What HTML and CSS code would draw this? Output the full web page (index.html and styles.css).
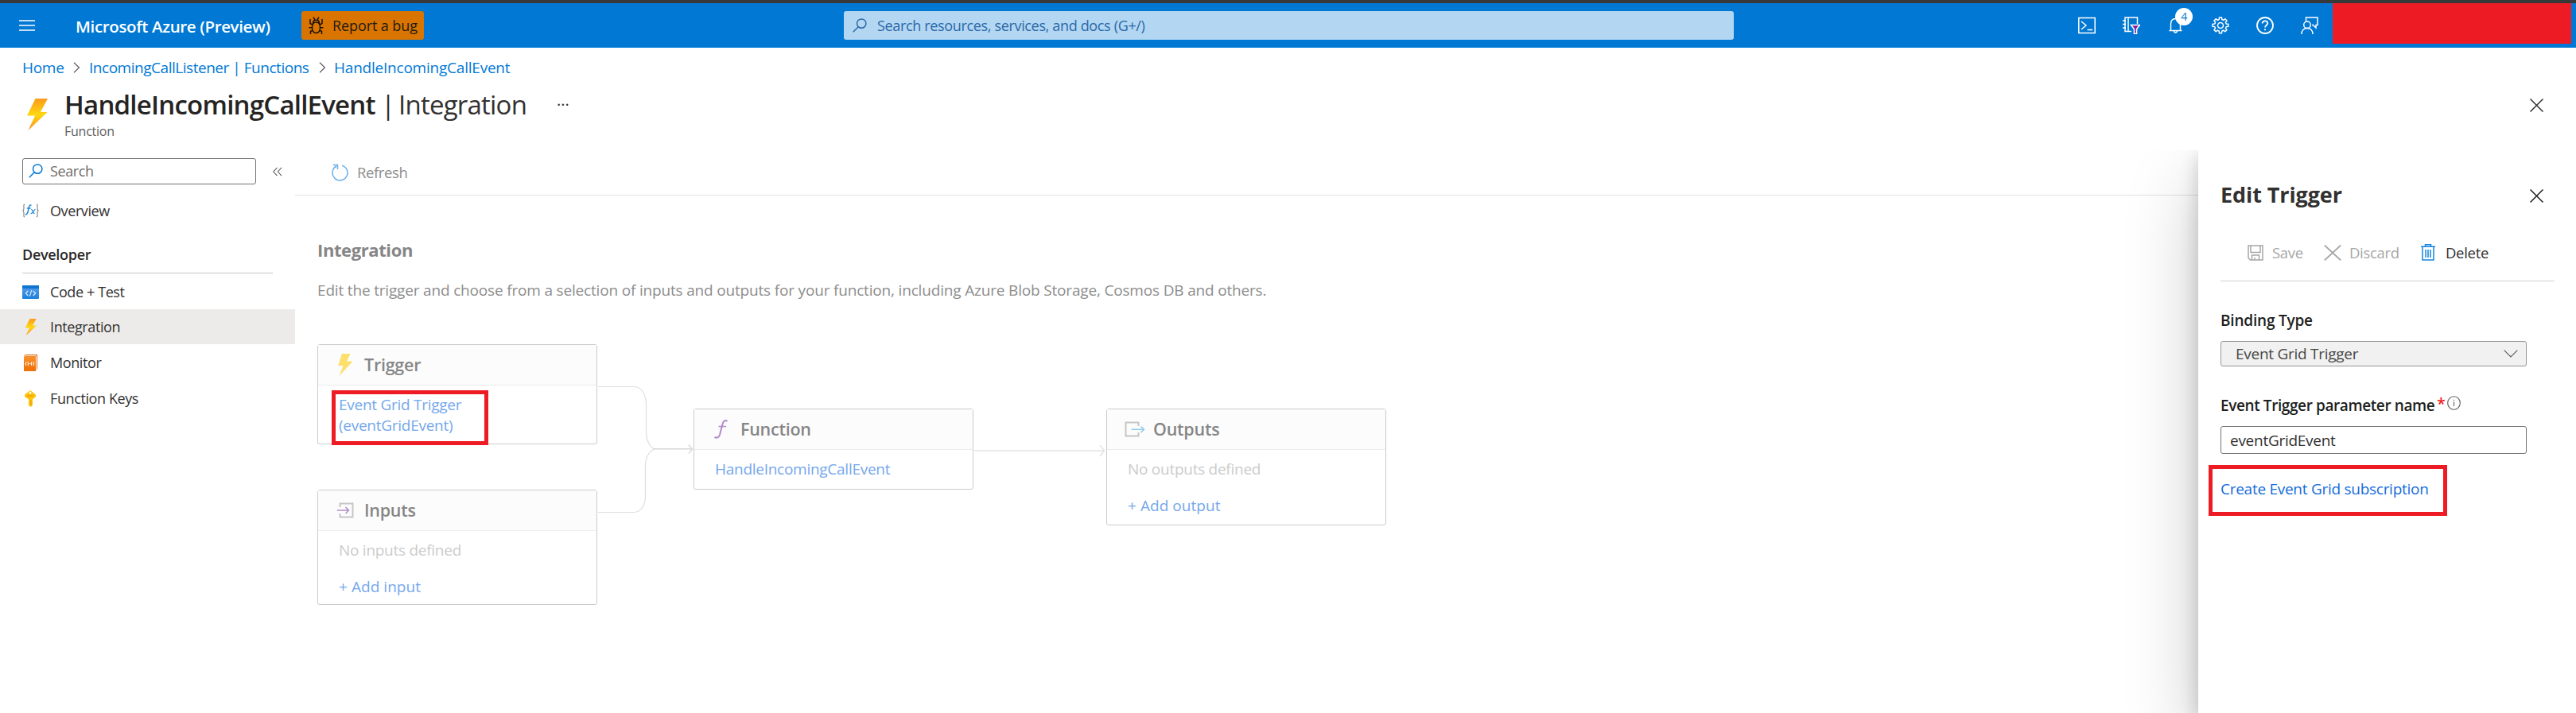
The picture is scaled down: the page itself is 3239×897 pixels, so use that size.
FILE: index.html
```html
<!DOCTYPE html>
<html lang="en">
<head>
<meta charset="utf-8">
<title>HandleIncomingCallEvent | Integration - Microsoft Azure</title>
<link rel="stylesheet" href="styles.css">
</head>
<body>
<svg width="0" height="0" class="defs">
  <defs>
    <linearGradient id="bolt" x1="0" y1="0" x2="0" y2="1">
      <stop offset="0" stop-color="#fd9a1c"/><stop offset=".5" stop-color="#fed70f"/><stop offset="1" stop-color="#fb8f1e"/>
    </linearGradient>
    <linearGradient id="orange" x1="0" y1="0" x2="0" y2="1">
      <stop offset="0" stop-color="#f9912b"/><stop offset="1" stop-color="#ee6f05"/>
    </linearGradient>
    <linearGradient id="blue" x1="0" y1="0" x2="0" y2="1">
      <stop offset="0" stop-color="#5ea0ef"/><stop offset="1" stop-color="#1a7fdc"/>
    </linearGradient>
  </defs>
</svg>

<header class="topbar">
  <svg class="burger" width="20" height="14" viewBox="0 0 20 14" stroke="#fff" stroke-width="1.4"><path d="M0 1h20M0 7h20M0 13h20"/></svg>
  <div class="brand">Microsoft Azure (Preview)</div>
  <button class="bug">
    <svg width="19" height="22" viewBox="0 0 19 22" fill="none" stroke="#1d1206" stroke-width="1.5"><path d="M9.5 7c-3.2 0-5 2.500-5 6.500s1.800 7 5 7 5-3 5-7-1.800-6.500-5-6.500zM5.500 8.500C5.500 5.500 7 4.300 9.500 4.300s4 1.200 4 4.200M7.500 4.300V3L6 .7M11.500 4.300V3L13 .7M4.800 10L2 8.500V3M14.200 10L17 8.500V3M4.500 13.800H.5M14.500 13.800h4M5 17l-2.500 1.500V22M14 17l2.500 1.500V22"/></svg>
    <span>Report a bug</span>
  </button>
  <div class="global-search">
    <svg width="18" height="18" viewBox="0 0 18 18" fill="none" stroke="#2a68a8" stroke-width="1.5"><circle cx="11.200" cy="6.600" r="5.700"/><path d="M7.200 10.700L.7 17.300"/></svg>
    <span>Search resources, services, and docs (G+/)</span>
  </div>
  <div class="tools">
    <svg width="22" height="22" viewBox="0 0 22 22" fill="none" stroke="#fff" stroke-width="1.500"><path d="M.8 1.500h20.400v19H.8zM4 6l6 5-6 5M11.500 16.500H18"/></svg>
    <svg width="22" height="22" viewBox="0 0 22 22" fill="none" stroke="#fff" stroke-width="1.500"><path d="M18.500 9V1H3v17.500h8M7 1v17.500M0 5h4M0 9.500h4M0 14h4"/><path d="M10.500 10.500h11l-3.900 5v6h-3.200v-6z" fill="#7b1fa2"/></svg>
    <div class="bell">
      <svg width="22" height="22" viewBox="0 0 22 22" fill="none" stroke="#fff" stroke-width="1.500"><path d="M2.500 17.500h16M4.500 17.500V9.500C4.500 5 7 2.500 10.500 2.500s6 2.500 6 7v8M8.500 18c.3 1.500 1 2 2 2s1.700-.5 2-2"/></svg>
      <span class="badge">4</span>
    </div>
    <svg width="22" height="22" viewBox="0 0 22 22" fill="none" stroke="#fff" stroke-width="1.500"><path d="M9.200 3.500L9.500 1h3l.3 2.500 2 .9 2-1.600 2.200 2.200-1.600 2 .9 2 2.500.3v3l-2.500.3-.9 2 1.600 2-2.200 2.200-2-1.600-2 .9-.3 2.700h-3l-.3-2.700-2-.9-2 1.600L3 16.600l1.600-2-.9-2L1 12.300v-3L3.700 9l.9-2L3 5l2.200-2.200 2 1.600z"/><circle cx="11" cy="11" r="3.500"/></svg>
    <svg width="22" height="22" viewBox="0 0 22 22" fill="none" stroke="#fff" stroke-width="1.800"><circle cx="11" cy="11" r="10"/><path d="M7.700 8.500c0-2 1.300-3.200 3.300-3.200s3.300 1.200 3.300 3c0 2.300-3.200 2.700-3.200 5.200M11 15.200v2"/></svg>
    <svg width="22" height="22" viewBox="0 0 22 22" fill="none" stroke="#fff" stroke-width="1.500"><path d="M6.500 5.500V1H21v9.500h-2v3.500l-3.500-3.500H14"/><circle cx="8" cy="10.300" r="4.300"/><path d="M1 22c0-4.500 2.700-7.400 7-7.400s7 2.900 7 7.400"/></svg>
  </div>
  <div class="account"></div>
</header>

<nav class="crumbs">
  <a class="c1">Home</a>
  <svg width="9" height="14" viewBox="0 0 9 14" fill="none" stroke="#605e5c" stroke-width="1.200"><path d="M1 .7L7.500 7 1 13.300"/></svg>
  <a class="c2">IncomingCallListener | Functions</a>
  <svg width="9" height="14" viewBox="0 0 9 14" fill="none" stroke="#605e5c" stroke-width="1.200"><path d="M1 .7L7.500 7 1 13.300"/></svg>
  <a class="c3">HandleIncomingCallEvent</a>
</nav>

<section class="titlebar">
  <svg class="title-icon" width="26" height="40" viewBox="0 0 26 40"><path d="M10.500 0H26L17 17h8.500L1.500 40 10 21.500H0z" fill="url(#bolt)"/></svg>
  <div class="titles">
    <h1><b>HandleIncomingCallEvent</b><i>|</i><span>Integration</span></h1>
    <div class="subtitle">Function</div>
  </div>
  <div class="more">···</div>
  <svg class="close" width="17" height="17" viewBox="0 0 17 17" stroke="#323130" stroke-width="1.500"><path d="M.5.5l16 16M16.500.5l-16 16"/></svg>
</section>

<div class="body">
  <aside class="sidebar">
    <div class="side-top">
      <div class="side-search">
        <svg width="18" height="18" viewBox="0 0 18 18" fill="none" stroke="#0078d4" stroke-width="1.500"><circle cx="11.200" cy="6.600" r="5.700"/><path d="M7.200 10.700L.7 17.300"/></svg>
        <span>Search</span>
      </div>
      <svg width="12" height="12" viewBox="0 0 12 12" fill="none" stroke="#605e5c" stroke-width="1.100"><path d="M5.500.8L.8 6l4.700 5.200M11 .8L6.300 6l4.700 5.200"/></svg>
    </div>
    <a class="item overview">
      <svg width="21" height="18" viewBox="0 0 21 18" fill="none"><path d="M3.200 1C1.500 1 2 2.500 2 5.500S1.500 8.800.4 9C1.500 9.200 2 9.500 2 12.500S1.500 17 3.200 17M17.800 1c1.700 0 1.200 1.500 1.200 4.500s.5 3.300 1.600 3.500c-1.100.2-1.600.5-1.600 3.500s.5 4.500-1.200 4.500" stroke="#8a8a8a" stroke-width="1.200"/><path d="M11.500 2.300C9.500 1.200 8.600 3 8.100 6S6.500 14.800 3.800 13.600M5.800 6h4.800" stroke="#1a86e0" stroke-width="1.500"/><path d="M11.200 7.500c2-.6 1.800 6 4.300 5M16.500 7.400c-1.900.3-3.400 5.200-5.800 5.200" stroke="#1a86e0" stroke-width="1.200"/></svg>
      <span>Overview</span>
    </a>
    <div class="group">Developer</div>
    <a class="item code">
      <svg width="21" height="17" viewBox="0 0 21 17"><rect width="21" height="17" rx="1" fill="url(#blue)"/><path d="M0 0h21v4H0z" fill="#0f74d1"/><path d="M7.300 7L4.300 10l3 3M13.700 7l3 3-3 3M11.800 6.200L9.300 13.800" fill="none" stroke="#e4f0fc" stroke-width="1.100"/></svg>
      <span>Code + Test</span>
    </a>
    <a class="item selected">
      <svg width="21" height="21" viewBox="-4 0 21 21"><path d="M5.500 0h8.200L9 8.500h5L.8 21 5 11.500H-.2z" fill="url(#bolt)"/></svg>
      <span>Integration</span>
    </a>
    <a class="item monitor">
      <svg width="21" height="21" viewBox="0 0 21 21"><path d="M2 1.500L4 0h15v18l-2 2z" fill="#e06a0a"/><path d="M3 1.700h14.500V19" fill="none" stroke="#fff" stroke-width="1"/><rect x="2" y="2.500" width="15" height="18.500" rx=".8" fill="url(#orange)"/><path d="M5 9.200c-.7 1.400-.7 3.200 0 4.600M7 9.200c.7 1.400.7 3.200 0 4.600M12 9.200c-.7 1.400-.7 3.200 0 4.600M14 9.200c.7 1.400.7 3.200 0 4.600M9 11.500h1.400" fill="none" stroke="#fff" stroke-width="1.100"/></svg>
      <span>Monitor</span>
    </a>
    <a class="item keys">
      <svg width="21" height="21" viewBox="0 0 21 21"><path d="M10 0l7 5.500v2.500L13 11.500V19l-2.500 2L8 19v-7.500L3 8V5.500z" fill="#fcc40a"/><circle cx="10" cy="3" r="1.500" fill="#fff"/><path d="M6 7h8M11 12.500V19" stroke="#f59d0c" stroke-width="1.300"/></svg>
      <span>Function Keys</span>
    </a>
  </aside>

  <main class="main">
    <div class="toolbar">
      <svg width="22" height="22" viewBox="0 0 22 22" fill="none" stroke="#6aaee8" stroke-width="1.500"><path d="M13 2.200A9.500 9.500 0 1 1 6 3M1.800 1.500H7.500V7"/></svg>
      <span>Refresh</span>
    </div>
    <div class="content">
      <h2>Integration</h2>
      <p>Edit the trigger and choose from a selection of inputs and outputs for your function, including Azure Blob Storage, Cosmos DB and others.</p>
    </div>
    <div class="canvas">
      <svg class="wires" width="1400" height="360" viewBox="0 0 1400 360" fill="none" stroke="#dedede" stroke-width="1.200">
        <path d="M353 53.500h45c10 0 15.500 10 15.500 24v34c0 10 5 18 10 20.500M353 211.500h45c9 0 14.500-9 14.500-21v-38c0-10 5-18 11-20.500"/>
        <path d="M422 131.800h49M467 126.500l4.500 5.500-4.500 5.500" stroke="#d8d8d8" stroke-width="1.400"/>
        <path d="M826 134h163M984 127l5.500 7-5.500 7" stroke="#e4e4e4" stroke-width="1.600"/>
      </svg>
      <section class="card trigger">
        <header><svg width="26" height="28" viewBox="0 0 26 28"><path d="M6 0H16.500L12 9.500h7.500L2.500 28l5-13H1z" fill="#fddf6c"/></svg><span>Trigger</span></header>
        <div class="rows"><a>Event Grid Trigger<br>(eventGridEvent)</a></div>
        <div class="highlight"></div>
      </section>
      <section class="card inputs">
        <header><svg width="26" height="20" viewBox="0 0 26 20" fill="none"><path d="M3.500 6V1.500h16v17h-16V14" stroke="#c5c5c5" stroke-width="2"/><path d="M0 10h14M10.500 6l4 4-4 4" stroke="#b48ac8" stroke-width="1.500"/></svg><span>Inputs</span></header>
        <div class="rows"><em>No inputs defined</em><a class="add">+ Add input</a></div>
      </section>
      <section class="card function">
        <header><svg width="26" height="24" viewBox="0 0 26 24" fill="none" stroke="#b48ac8"><path d="M17.500 2.200C15.500-.2 12.500 1.500 11.500 5.500L8 19c-1 3.500-4 4.500-6.500 2.800" stroke-width="2"/><path d="M6.500 8.500h9.500" stroke-width="1.500"/></svg><span>Function</span></header>
        <div class="rows"><a>HandleIncomingCallEvent</a></div>
      </section>
      <section class="card outputs">
        <header><svg width="26" height="20" viewBox="2 0 26 20" fill="none"><path d="M17.500 6V1.500h-16v17h16V14" stroke="#c5c5c5" stroke-width="2"/><path d="M8.500 10.300h15M20.500 6.500l4 3.800-4 3.800" stroke="#8fcdea" stroke-width="1.500"/></svg><span>Outputs</span></header>
        <div class="rows"><em>No outputs defined</em><a class="add">+ Add output</a></div>
      </section>
    </div>
  </main>

  <section class="panel">
    <div class="panel-head">
      <h2>Edit Trigger</h2>
      <svg width="17" height="17" viewBox="0 0 17 17" stroke="#201f1e" stroke-width="1.500"><path d="M.5.5l16 16M16.500.5l-16 16"/></svg>
    </div>
    <div class="commands">
      <div class="cmd save"><svg width="20" height="20" viewBox="0 0 20 20" fill="none" stroke="#a6a6a6" stroke-width="1.500"><path d="M1 1h18v18H3.500L1 16.500zM4 1v8.500h12V1M5.500 19v-6h9v6M9 19v-3"/></svg><span>Save</span></div>
      <div class="cmd discard"><svg width="22" height="20" viewBox="0 0 22 20" stroke="#a6a6a6" stroke-width="1.800"><path d="M.8.500l20.400 19M21.200.500L.8 19.500"/></svg><span>Discard</span></div>
      <div class="cmd delete"><svg width="18" height="21" viewBox="0 0 18 21" fill="none" stroke="#1583dd" stroke-width="1.500"><path d="M0 3.300h18M5.500 3V.8h7V3M2 3.500V20h14V3.500M6 7v10M9 7v10M12 7v10"/></svg><span>Delete</span></div>
    </div>
    <div class="form">
      <label class="l1">Binding Type</label>
      <div class="select"><span>Event Grid Trigger</span><svg width="18" height="10" viewBox="0 0 18 10" fill="none" stroke="#605e5c" stroke-width="1.200"><path d="M.7.700L9 9 17.300.7"/></svg></div>
      <label class="l2"><span>Event Trigger parameter name</span><b>*</b><svg width="17" height="18" viewBox="0 0 17 18" fill="none" stroke="#605e5c" stroke-width="1.100"><ellipse cx="8.500" cy="9" rx="7.800" ry="8.200"/><path d="M8.500 7.500V13M8.500 4.800v1.300"/></svg></label>
      <div class="input"><span>eventGridEvent</span></div>
      <div class="link-box"><a>Create Event Grid subscription</a></div>
    </div>
  </section>
</div>
</body>
</html>
```
FILE: styles.css
```css
* { box-sizing: border-box; }
body {
  margin: 0;
  width: 3239px;
  height: 897px;
  overflow: hidden;
  background: #fff;
  color: #323130;
  font-family: "Open Sans", "Noto Sans", sans-serif;
  font-size: 18px;
  line-height: 24px;
  letter-spacing: -.4px;
  white-space: nowrap;
  display: flex;
  flex-direction: column;
}
svg { display: block; flex: none; }
h1, h2, p { margin: 0; }
.defs { position: absolute; }

/* top bar */
.topbar {
  flex: none;
  height: 60px;
  padding: 0 6px 0 24px;
  background: #0078d4;
  border-top: 4px solid #37383a;
  display: flex;
  align-items: center;
}
.burger { margin-bottom: 1px; }
.brand {
  width: 284px;
  margin-left: 51px;
  padding-top: 2px;
  color: #fff;
  font-size: 20.5px;
  font-weight: 600;
  letter-spacing: -.35px;
}
.bug {
  width: 154px;
  height: 36px;
  margin: 0;
  padding: 0 0 0 9px;
  border: 0;
  border-radius: 3px;
  background: #d97400;
  color: #1f1a12;
  font: 500 18px/24px "Open Sans", "Noto Sans", sans-serif;
  letter-spacing: -.1px;
  display: flex;
  align-items: center;
  gap: 11px;
}
.global-search {
  width: 1119px;
  height: 36px;
  margin-left: 528px;
  padding-left: 11px;
  border-radius: 3px;
  background: #b3d7f2;
  color: #2a68a8;
  letter-spacing: -.34px;
  display: flex;
  align-items: center;
  gap: 13px;
}
.tools { margin-left: 433px; display: flex; gap: 34px; }
.bell { position: relative; }
.badge {
  position: absolute;
  left: 10px;
  top: -11px;
  width: 22px;
  height: 22px;
  border-radius: 50%;
  background: #fff;
  color: #0078d4;
  font-size: 14px;
  line-height: 21px;
  text-align: center;
}
.account { width: 300px; height: 51px; margin-left: 18px; align-self: flex-start; background: #ed1c24; }

/* breadcrumbs and title */
.crumbs {
  flex: none;
  height: 50px;
  padding-left: 28px;
  display: flex;
  align-items: center;
  color: #0078d4;
  font-size: 19px;
}
.crumbs .c1 { width: 64px; letter-spacing: -.3px; }
.crumbs .c2 { width: 289px; margin-left: 11px; letter-spacing: -.47px; }
.crumbs .c3 { margin-left: 10px; letter-spacing: -.22px; }
.titlebar {
  flex: none;
  height: 79px;
  padding: 0 41px 0 34px;
  display: flex;
  align-items: flex-start;
}
.title-icon { margin-top: 14px; }
.titles { width: 619px; margin-left: 21px; }
h1 { font-size: 33px; line-height: 43px; margin-bottom: 1px; font-weight: 400; letter-spacing: -.78px; display: flex; color: #323130; }
h1 b { width: 398px; font-weight: 600; color: #252423; }
h1 i { width: 22px; font-style: normal; }
.subtitle { font-size: 16px; line-height: 22px; color: #605e5c; letter-spacing: -.25px; }
.more { font-size: 20px; line-height: 44px; letter-spacing: 0; }
.close { margin: 14px 0 0 auto; }

/* body */
.body { flex: 1; display: flex; min-height: 0; overflow: hidden; }
.sidebar { width: 371px; flex: none; padding-top: 10px; }
.side-top { display: flex; align-items: center; gap: 21px; padding-left: 28px; }
.side-search {
  width: 294px;
  height: 33px;
  border: 1px solid #75736f;
  border-radius: 3px;
  padding: 0 0 2px 7px;
  color: #6f6d6b;
  display: flex;
  align-items: center;
  gap: 9px;
}
.item { height: 44px; margin-bottom: 1px; padding-left: 28px; display: flex; align-items: center; gap: 14px; }
.overview { margin-top: 11px; }
.group {
  width: 315px;
  height: 42px;
  margin: 15px 0 1px 28px;
  line-height: 36px;
  border-bottom: 1px solid #c8c6c4;
  font-weight: 600;
  color: #292827;
  letter-spacing: -.3px;
}
.selected { background: #edebe9; }
.code { margin-bottom: 0; }

.main { flex: 1; min-width: 0; }
.toolbar {
  height: 57px;
  border-bottom: 1px solid #e1e1e1;
  padding-left: 46px;
  display: flex;
  align-items: center;
  gap: 10px;
  color: #8d8d8d;
  font-size: 18.5px;
}
.content { padding: 56px 0 0 28px; color: #8d8d8d; }
.content h2 { font-size: 22px; line-height: 24px; font-weight: 700; color: #868686; letter-spacing: -.4px; }
.content p { font-size: 19px; line-height: 24px; margin-top: 27px; letter-spacing: -.175px; }

/* diagram */
.canvas { position: relative; margin: 56px 0 0 28px; width: 1400px; height: 360px; }
.wires { position: absolute; left: 0; top: 0; }
.card {
  position: absolute;
  width: 352px;
  border: 1px solid #cbcbcb;
  border-radius: 3px;
  background: #fff;
  font-size: 19px;
  letter-spacing: -.27px;
}
.card header {
  height: 51px;
  padding-left: 24px;
  background: #fcfcfc;
  border-bottom: 1px solid #ececec;
  font-size: 21.5px;
  font-weight: 600;
  color: #868686;
  display: flex;
  align-items: center;
  gap: 8px;
  letter-spacing: -.25px;
}
.card header svg { overflow: visible; }
.rows { padding: 11px 0 0 26px; line-height: 26px; display: flex; flex-direction: column; gap: 20px; }
.rows a { color: #74a7ec; }
.rows .add { letter-spacing: .05px; }
.rows em { font-style: normal; color: #cbcbcb; }
.trigger { left: 0; top: 0; height: 126px; }
.inputs { left: 0; top: 183px; height: 145px; }
.function { left: 473px; top: 81px; height: 102px; }
.outputs { left: 992px; top: 81px; height: 147px; }
.highlight { position: absolute; left: 17px; top: 57px; width: 197px; height: 69px; border: 5px solid #ed1c24; }

/* edit panel */
.panel {
  width: 475px;
  flex: none;
  background: #fff;
  padding: 0 27px 0 28px;
  box-shadow: 0 38px 86px rgba(0,0,0,.22), 0 7px 22px rgba(0,0,0,.18);
}
.panel-head { height: 108px; padding: 6px 14px 0 0; display: flex; align-items: center; justify-content: space-between; }
.panel-head h2 { margin-top: -3px; font-size: 27px; line-height: 32px; font-weight: 700; letter-spacing: -.1px; }
.commands {
  height: 57px;
  padding: 0 0 14px 34px;
  border-bottom: 1px solid #d2d0ce;
  display: flex;
  align-items: flex-start;
  font-size: 18.5px;
}
.cmd { height: 41px; display: flex; align-items: center; color: #a6a6a6; letter-spacing: -.3px; }
.save { gap: 11px; width: 96px; }
.discard { gap: 10px; width: 122px; }
.delete { gap: 13px; color: #323130; }
.form { width: 385px; font-size: 19px; letter-spacing: -.27px; }
.form label { display: flex; font-weight: 600; color: #201f1e; letter-spacing: -.4px; }
.form .l1 { margin-top: 37px; letter-spacing: -.2px; }
.select {
  height: 32px;
  margin-top: 14px;
  padding: 0 10px 0 18px;
  background: #f1f1f1;
  border: 1px solid #979593;
  border-radius: 3px;
  display: flex;
  align-items: center;
  justify-content: space-between;
  color: #484644;
}
.l2 { margin-top: 37px; }
.l2 b { margin: -2px 3px 0 3px; color: #ed1c24; font-weight: 600; }
.input {
  height: 35px;
  margin-top: 14px;
  padding-left: 11px;
  border: 1px solid #75736f;
  border-radius: 3px;
  display: flex;
  align-items: center;
}
.link-box {
  width: 300px;
  height: 64px;
  margin: 14px 0 0 -15px;
  border: 5px solid #ed1c24;
  padding: 0 0 5px 10px;
  display: flex;
  align-items: center;
  color: #156bdb;
}
```
